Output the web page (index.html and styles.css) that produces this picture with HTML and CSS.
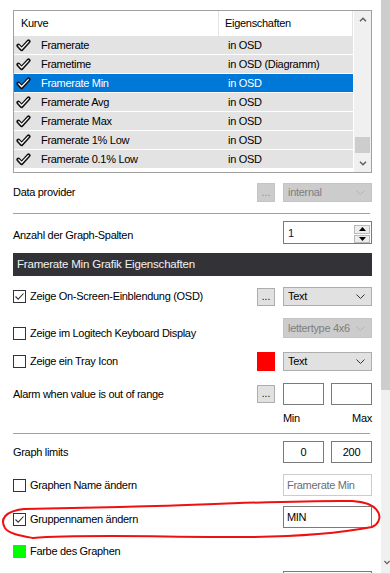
FILE: index.html
```html
<!DOCTYPE html>
<html>
<head>
<meta charset="utf-8">
<link rel="stylesheet" href="styles.css">
</head>
<body>
<div class="window">
  <div class="content">
    <div class="listbox">
      <div class="list-main">
        <div class="list-head">
          <div class="hc hc1">Kurve</div>
          <div class="hc hc2">Eigenschaften</div>
        </div>
        <div class="row"><span class="ic"><svg width="15" height="13" viewBox="0 0 15 13"><path d="M2.4 6.6 L5.6 10.2 L12.6 2.4" fill="none" stroke="#111" stroke-width="4" stroke-linecap="round" stroke-linejoin="round"/><path d="M2.8 6.8 L5.6 9.7 L12.3 2.6" fill="none" stroke="#fff" stroke-width="1.3" stroke-linecap="round" stroke-linejoin="round"/></svg></span><span class="rc1">Framerate</span><span class="rc2">in OSD</span></div>
        <div class="row"><span class="ic"><svg width="15" height="13" viewBox="0 0 15 13"><path d="M2.4 6.6 L5.6 10.2 L12.6 2.4" fill="none" stroke="#111" stroke-width="4" stroke-linecap="round" stroke-linejoin="round"/><path d="M2.8 6.8 L5.6 9.7 L12.3 2.6" fill="none" stroke="#fff" stroke-width="1.3" stroke-linecap="round" stroke-linejoin="round"/></svg></span><span class="rc1">Frametime</span><span class="rc2">in OSD (Diagramm)</span></div>
        <div class="row sel"><span class="ic"><svg width="15" height="13" viewBox="0 0 15 13"><path d="M2.4 6.6 L5.6 10.2 L12.6 2.4" fill="none" stroke="#111" stroke-width="4" stroke-linecap="round" stroke-linejoin="round"/><path d="M2.8 6.8 L5.6 9.7 L12.3 2.6" fill="none" stroke="#fff" stroke-width="1.3" stroke-linecap="round" stroke-linejoin="round"/></svg></span><span class="rc1">Framerate Min</span><span class="rc2">in OSD</span></div>
        <div class="row"><span class="ic"><svg width="15" height="13" viewBox="0 0 15 13"><path d="M2.4 6.6 L5.6 10.2 L12.6 2.4" fill="none" stroke="#111" stroke-width="4" stroke-linecap="round" stroke-linejoin="round"/><path d="M2.8 6.8 L5.6 9.7 L12.3 2.6" fill="none" stroke="#fff" stroke-width="1.3" stroke-linecap="round" stroke-linejoin="round"/></svg></span><span class="rc1">Framerate Avg</span><span class="rc2">in OSD</span></div>
        <div class="row"><span class="ic"><svg width="15" height="13" viewBox="0 0 15 13"><path d="M2.4 6.6 L5.6 10.2 L12.6 2.4" fill="none" stroke="#111" stroke-width="4" stroke-linecap="round" stroke-linejoin="round"/><path d="M2.8 6.8 L5.6 9.7 L12.3 2.6" fill="none" stroke="#fff" stroke-width="1.3" stroke-linecap="round" stroke-linejoin="round"/></svg></span><span class="rc1">Framerate Max</span><span class="rc2">in OSD</span></div>
        <div class="row"><span class="ic"><svg width="15" height="13" viewBox="0 0 15 13"><path d="M2.4 6.6 L5.6 10.2 L12.6 2.4" fill="none" stroke="#111" stroke-width="4" stroke-linecap="round" stroke-linejoin="round"/><path d="M2.8 6.8 L5.6 9.7 L12.3 2.6" fill="none" stroke="#fff" stroke-width="1.3" stroke-linecap="round" stroke-linejoin="round"/></svg></span><span class="rc1">Framerate 1% Low</span><span class="rc2">in OSD</span></div>
        <div class="row"><span class="ic"><svg width="15" height="13" viewBox="0 0 15 13"><path d="M2.4 6.6 L5.6 10.2 L12.6 2.4" fill="none" stroke="#111" stroke-width="4" stroke-linecap="round" stroke-linejoin="round"/><path d="M2.8 6.8 L5.6 9.7 L12.3 2.6" fill="none" stroke="#fff" stroke-width="1.3" stroke-linecap="round" stroke-linejoin="round"/></svg></span><span class="rc1">Framerate 0.1% Low</span><span class="rc2">in OSD</span></div>
      </div>
      <div class="list-scroll">
        <div class="arrow"><svg width="8" height="5" viewBox="0 0 8 5"><path d="M1 4.2 L4 1.2 L7 4.2" fill="none" stroke="#606060" stroke-width="1.5"/></svg></div>
        <div class="ltrack"><div class="lthumb"></div></div>
        <div class="arrow"><svg width="8" height="5" viewBox="0 0 8 5"><path d="M1 0.8 L4 3.8 L7 0.8" fill="none" stroke="#606060" stroke-width="1.5"/></svg></div>
      </div>
    </div>

    <div class="frow r-provider">
      <div class="lbl">Data provider</div>
      <div class="btn dis">...</div>
      <div class="combo dis"><span>internal</span><svg width="9" height="5" viewBox="0 0 9 5"><path d="M0.5 0.5 L4.5 4.5 L8.5 0.5" fill="none" stroke="#b4b4b4" stroke-width="1"/></svg></div>
    </div>

    <div class="sep s1"></div>

    <div class="frow r-cols">
      <div class="lbl lowered">Anzahl der Graph-Spalten</div>
      <div></div>
      <div class="num">
        <span class="numv">1</span>
        <div class="spin">
          <div class="sb"><svg width="7" height="4" viewBox="0 0 7 4"><path d="M0 4 L3.5 0 L7 4 Z" fill="#000"/></svg></div>
          <div class="sb"><svg width="7" height="4" viewBox="0 0 7 4"><path d="M0 0 L3.5 4 L7 0 Z" fill="#000"/></svg></div>
        </div>
      </div>
    </div>

    <div class="gbar">Framerate Min Grafik Eigenschaften</div>

    <div class="frow r-osd">
      <div class="cb"><span class="box"><svg width="11" height="11" viewBox="0 0 11 11"><path d="M1.5 5.5 L4.2 8.2 L9.5 2.5" fill="none" stroke="#333" stroke-width="1.1"/></svg></span><span>Zeige On-Screen-Einblendung (OSD)</span></div>
      <div class="btn">...</div>
      <div class="combo"><span>Text</span><svg width="9" height="5" viewBox="0 0 9 5"><path d="M0.5 0.5 L4.5 4.5 L8.5 0.5" fill="none" stroke="#333" stroke-width="1"/></svg></div>
    </div>

    <div class="frow r-logi">
      <div class="cb low"><span class="box"></span><span>Zeige im Logitech Keyboard Display</span></div>
      <div></div>
      <div class="combo dis top"><span>lettertype 4x6</span><svg width="9" height="5" viewBox="0 0 9 5"><path d="M0.5 0.5 L4.5 4.5 L8.5 0.5" fill="none" stroke="#b4b4b4" stroke-width="1"/></svg></div>
    </div>

    <div class="frow r-tray">
      <div class="cb"><span class="box"></span><span>Zeige ein Tray Icon</span></div>
      <div class="swatch red"></div>
      <div class="combo"><span>Text</span><svg width="9" height="5" viewBox="0 0 9 5"><path d="M0.5 0.5 L4.5 4.5 L8.5 0.5" fill="none" stroke="#333" stroke-width="1"/></svg></div>
    </div>

    <div class="frow r-alarm">
      <div class="lbl">Alarm when value is out of range</div>
      <div class="btn">...</div>
      <div class="pair"><div class="tb small"></div><div class="tb small"></div></div>
    </div>

    <div class="frow r-minmax">
      <div></div>
      <div></div>
      <div class="mm"><span>Min</span><span>Max</span></div>
    </div>

    <div class="sep s2"></div>

    <div class="frow r-limits">
      <div class="lbl">Graph limits</div>
      <div></div>
      <div class="pair"><div class="tb small center">0</div><div class="tb small center">200</div></div>
    </div>

    <div class="frow r-name">
      <div class="cb"><span class="box"></span><span>Graphen Name ändern</span></div>
      <div></div>
      <div class="tb dis">Framerate Min</div>
    </div>

    <div class="frow r-group">
      <div class="cb low2"><span class="box"><svg width="11" height="11" viewBox="0 0 11 11"><path d="M1.5 5.5 L4.2 8.2 L9.5 2.5" fill="none" stroke="#333" stroke-width="1.1"/></svg></span><span>Gruppennamen ändern</span></div>
      <div></div>
      <div class="tb">MIN</div>
    </div>

    <div class="frow r-color">
      <div class="cb"><span class="swatch green"></span><span>Farbe des Graphen</span></div>
      <div></div>
      <div></div>
    </div>

    <div class="frow r-last">
      <div></div>
      <div></div>
      <div class="tb"></div>
    </div>
  </div>

  <div class="vscroll">
    <div class="vthumb"></div>
    <div class="vtrack"><svg width="7" height="5" viewBox="0 0 7 5"><path d="M0.5 0.8 L3.5 3.8 L6.5 0.8" fill="none" stroke="#606060" stroke-width="1.4"/></svg></div>
  </div>

  <svg class="annot" width="390" height="574" viewBox="0 0 390 574">
    <path d="M33 538 C 22 536, 9 534, 5 528 C 0 520, 4 511, 24 509 L 120 507 C 200 505, 300 500, 352 501 C 384 503, 384 522, 372 527 C 340 533, 290 537, 240 537 C 160 537, 80 534, 33 538" fill="none" stroke="#ee1111" stroke-width="2" stroke-linecap="round"/>
  </svg>
</div>
</body>
</html>
```

FILE: styles.css
```css
* { box-sizing: border-box; margin: 0; padding: 0; }
html, body { width: 390px; height: 574px; overflow: hidden; background: #fff; }
body {
  font-family: "Liberation Sans", Arial, sans-serif;
  font-size: 11px;
  letter-spacing: -0.3px;
  line-height: 13px;
  color: #000;
}
.window {
  position: relative;
  display: flex;
  width: 390px;
  height: 574px;
  border-bottom: 1px solid #dcdcdc;
  overflow: hidden;
}
.content { width: 381px; flex: none; padding: 10px 9px 0 13px; }

/* list */
.listbox { display: flex; width: 359px; height: 163px; border: 1px solid #a0a0a0; }
.list-main { width: 340px; display: flex; flex-direction: column; }
.list-head { display: flex; height: 25px; }
.hc { height: 25px; display: flex; align-items: center; border-right: 1px solid #e5e5e5; }
.hc1 { width: 205px; padding-left: 7px; }
.hc2 { width: 134px; padding-left: 6px; }
.row { display: flex; align-items: center; width: 339px; height: 18px; margin-bottom: 1px; background: #e3e3e3; }
.row.sel { background: #0078d7; color: #fff; }
.ic { width: 27px; padding-left: 2px; display: flex; align-items: center; }
.rc1 { width: 178px; }
.rc2 { padding-left: 9px; }
.list-scroll { width: 17px; background: #f0f0f0; display: flex; flex-direction: column; }
.arrow { height: 17px; display: flex; align-items: center; justify-content: center; }
.ltrack { flex: 1; display: flex; flex-direction: column; justify-content: flex-end; padding: 0 1px 2px; }
.lthumb { height: 16px; background: #cdcdcd; }

/* form rows */
.frow { display: grid; grid-template-columns: 1fr 18px 89px; column-gap: 8px; width: 359px; align-items: center; }
.r-provider { margin-top: 10px; height: 19px; }
.r-cols { margin-top: 7px; height: 23px; }
.r-osd { margin-top: 11px; height: 19px; }
.r-logi { margin-top: 12px; height: 22px; }
.r-tray { margin-top: 12px; height: 19px; }
.r-alarm { margin-top: 12px; height: 22px; }
.r-minmax { margin-top: 6px; height: 14px; }
.r-limits { margin-top: 7px; height: 22px; }
.r-name { margin-top: 11px; height: 22px; }
.r-group { margin-top: 10px; height: 22px; }
.r-color { margin-top: 17px; height: 13px; }
.r-last { margin-top: 13px; height: 20px; align-items: start; }

.lbl { white-space: nowrap; }
.lowered { padding-top: 5px; }

.sep { width: 357px; height: 1px; background: #a0a0a0; }
.s1 { margin-top: 11px; }
.s2 { margin-top: 8px; }

.btn {
  height: 18px; background: #e1e1e1; border: 1px solid #adadad;
  display: flex; align-items: flex-end; justify-content: center;
  font-size: 10px; line-height: 12px; padding-bottom: 2px; letter-spacing: 0;
}
.r-provider .btn { height: 19px; }
.btn.dis { background: #cccccc; border-color: #c4c4c4; color: #8a8a8a; }

.combo {
  height: 19px; background: #e1e1e1; border: 1px solid #adadad;
  display: flex; align-items: center; justify-content: space-between;
  padding: 0 6px 0 4px; white-space: nowrap;
}
.combo.dis { background: #cccccc; border-color: #c4c4c4; color: #7e7e7e; }
.combo.top { align-self: start; height: 20px; }

.num { height: 23px; border: 1px solid #7a7a7a; background: #fff; display: flex; justify-content: space-between; padding: 3px 1px 0 4px; }
.numv { padding-top: 2px; color: #1a0a50; }
.spin { display: flex; flex-direction: column; gap: 1px; }
.sb { width: 16px; height: 9px; background: #ececec; border: 1px solid #b9b9b9; display: flex; align-items: center; justify-content: center; }

.gbar {
  margin-top: 9px; width: 359px; height: 23px; background: #333337; color: #f2f2f2;
  padding-left: 4px; display: flex; align-items: center;
  font-size: 11.5px; letter-spacing: -0.2px;
}

.cb { display: flex; align-items: center; gap: 4px; white-space: nowrap; }
.cb.low { align-self: end; }
.cb.low2 { padding-top: 4px; }
.box { width: 13px; height: 13px; border: 1px solid #333; background: #fff; flex: none; display: flex; align-items: center; justify-content: center; }

.swatch { flex: none; }
.red { width: 18px; height: 19px; background: #ff0000; }
.green { width: 13px; height: 13px; background: #00ff00; }

.pair { display: flex; justify-content: space-between; }
.tb { height: 22px; border: 1px solid #7a7a7a; background: #fff; padding-left: 3px; display: flex; align-items: center; white-space: nowrap; }
.tb.small { width: 41px; }
.tb.center { justify-content: center; padding-left: 0; }
.tb.dis { border-color: #cccccc; color: #6d6d6d; }
.r-last .tb { height: 20px; }

.mm { display: flex; justify-content: space-between; line-height: 14px; }

/* outer scrollbar */
.vscroll { width: 9px; flex: none; display: flex; flex-direction: column; background: #f0f0f0; }
.vthumb { height: 390px; background: #cdcdcd; }
.vtrack { flex: 1; display: flex; align-items: flex-end; padding: 0 0 8px 3px; }

.annot { position: absolute; left: 0; top: 0; pointer-events: none; }
```
